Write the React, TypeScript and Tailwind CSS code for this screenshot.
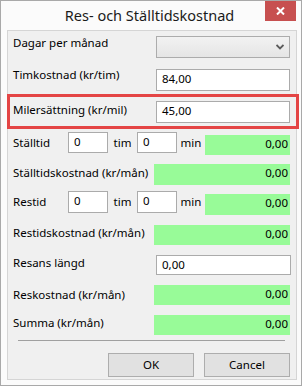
import React from "react";

const font = { fontFamily: '"Noto Sans", "Open Sans", sans-serif' };

function Label({ text, w, mt }: { text: string; w: string; mt: string }) {
  return <div className={`${w} ${mt} shrink-0 text-[11.5px] leading-[16px] text-black whitespace-nowrap`}>{text}</div>;
}

function TextBox({ value, cls }: { value: string; cls: string }) {
  return (
    <div className={`${cls} shrink-0 bg-white border border-[#ababab] pl-[5px] text-[11.5px] leading-[16px] text-black flex items-start pt-[1px]`}>
      {value}
    </div>
  );
}

function Green({ cls }: { cls: string }) {
  return (
    <div className={`${cls} shrink-0 bg-[#98fb98] pr-[2px] text-right text-[11.5px] leading-[16px] text-black pt-[1px]`}>
      0,00
    </div>
  );
}

export default function App() {
  return (
    <div className="relative w-[303px] h-[387px] bg-white" style={font}>
      <div className="w-[302px] h-[386px] border border-[#a9a9a9] bg-[#fbfbfb] flex flex-col">
        {/* title bar */}
        <div className="relative h-[29px] flex items-start justify-center">
          <div className="mt-[4px] text-[14.5px] leading-[20px] text-[#1a1a1a] ml-[-3px]">Res- och Ställtidskostnad</div>
          <div className="absolute right-[5px] top-0 w-[31px] h-[20px] bg-[#c75050] flex items-center justify-center">
            <svg width="9" height="8" viewBox="0 0 9 8">
              <path d="M1 0.5 L8 7.5 M8 0.5 L1 7.5" stroke="white" strokeWidth="2" />
            </svg>
          </div>
        </div>

        {/* panel */}
        <div className="ml-[6px] w-[290px] h-[350px] border border-[#d5d5d5] bg-[#f0f0f0] flex flex-col pl-[5px] pr-[6px]">
          <div className="flex items-start mt-[4px]">
            <Label text="Dagar per månad" w="w-[143px]" mt="mt-0" />
            <div className="mt-[1px] w-[134px] h-[22px] border border-[#acacac] bg-gradient-to-b from-[#f2f2f2] to-[#e5e5e5] flex items-center justify-end pr-[5px]">
              <svg width="8" height="6" viewBox="0 0 8 6">
                <path d="M0.5 1 L4 4.5 L7.5 1" stroke="#5a5a5a" strokeWidth="1.8" fill="none" />
              </svg>
            </div>
          </div>

          <div className="flex items-start mt-[9px]">
            <Label text="Timkostnad (kr/tim)" w="w-[143px]" mt="mt-0" />
            <TextBox value="84,00" cls="mt-[2px] w-[134px] h-[22px]" />
          </div>

          <div className="flex items-start mt-[10px]">
            <Label text="Milersättning (kr/mil)" w="w-[143px]" mt="mt-[1px]" />
            <TextBox value="45,00" cls="w-[134px] h-[22px]" />
          </div>

          <div className="flex items-start mt-[9px]">
            <Label text="Ställtid" w="w-[55px]" mt="mt-[3px]" />
            <TextBox value="0" cls="w-[40px] h-[21px]" />
            <div className="w-[29px] mt-[3px] text-center text-[11.5px] leading-[16px]">tim</div>
            <TextBox value="0" cls="w-[40px] h-[21px]" />
            <div className="w-[28px] mt-[3px] text-center text-[11.5px] leading-[16px]">min</div>
            <Green cls="mt-[3px] w-[85px] h-[20px]" />
          </div>

          <div className="flex items-start mt-[9px]">
            <Label text="Ställtidskostnad (kr/mån)" w="w-[141px]" mt="mt-[1px]" />
            <Green cls="w-[136px] h-[21px]" />
          </div>

          <div className="flex items-start mt-[6px]">
            <Label text="Restid" w="w-[55px]" mt="mt-[3px]" />
            <TextBox value="0" cls="w-[40px] h-[22px]" />
            <div className="w-[29px] mt-[3px] text-center text-[11.5px] leading-[16px]">tim</div>
            <TextBox value="0" cls="w-[40px] h-[22px]" />
            <div className="w-[28px] mt-[3px] text-center text-[11.5px] leading-[16px]">min</div>
            <Green cls="mt-[3px] w-[85px] h-[21px]" />
          </div>

          <div className="flex items-start mt-[10px]">
            <Label text="Restidskostnad (kr/mån)" w="w-[141px]" mt="mt-0" />
            <Green cls="w-[136px] h-[20px]" />
          </div>

          <div className="flex items-start mt-[10px]">
            <Label text="Resans längd" w="w-[143px]" mt="mt-0" />
            <TextBox value="0,00" cls="w-[135px] h-[20px]" />
          </div>

          <div className="flex items-start mt-[10px]">
            <Label text="Reskostnad (kr/mån)" w="w-[141px]" mt="mt-[2px]" />
            <Green cls="w-[136px] h-[20px]" />
          </div>

          <div className="flex items-start mt-[10px]">
            <Label text="Summa (kr/mån)" w="w-[141px]" mt="mt-0" />
            <Green cls="w-[136px] h-[20px]" />
          </div>

          <div className="mt-[5px] ml-[5px] w-[267px] h-[1px] bg-[#a0a0a0]" />

          <div className="flex justify-end gap-[10px] mt-[12px]">
            <button className="w-[86px] h-[24px] bg-[#e1e1e1] border border-[#adadad] text-[11.5px] text-black">OK</button>
            <button className="w-[86px] h-[24px] bg-[#e1e1e1] border border-[#adadad] text-[11.5px] text-black">Cancel</button>
          </div>
        </div>
      </div>

      {/* highlight annotation */}
      <div className="absolute left-[7px] top-[94px] w-[292px] h-[35px] border-[3px] border-[#e44545]" />
    </div>
  );
}
